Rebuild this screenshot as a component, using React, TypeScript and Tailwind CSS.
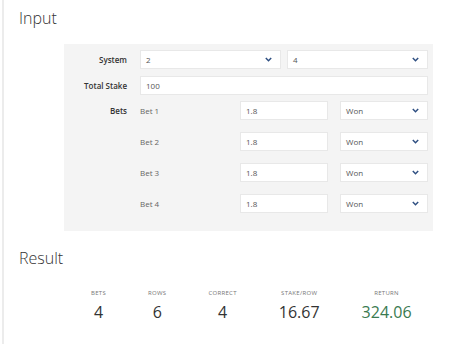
import React from "react";

const Chevron = () => (
  <svg width="7" height="5" viewBox="0 0 7 5" className="shrink-0">
    <path d="M0.8 1 L3.5 3.7 L6.2 1" fill="none" stroke="#2f4f82" strokeWidth="1.5" />
  </svg>
);

const Select = ({ value }: { value: string }) => (
  <div className="h-[19px] bg-white border border-[#e8e8e8] flex items-center justify-between pl-[5px] pr-[8px] text-[8px] text-[#555]">
    <span>{value}</span>
    <Chevron />
  </div>
);

const Input = ({ value }: { value: string }) => (
  <div className="h-[19px] bg-white border border-[#e8e8e8] flex items-center pl-[5px] text-[8px] text-[#555]">
    {value}
  </div>
);

const Label = ({ children }: { children: React.ReactNode }) => (
  <div className="h-[19px] flex items-center justify-end text-[8px] font-semibold text-[#333]">{children}</div>
);

const Stat = ({ label, value, green }: { label: string; value: string; green?: boolean }) => (
  <div className="flex flex-col items-center">
    <div className="h-[8px] leading-[8px] text-[6px] tracking-[0.3px] text-[#777] uppercase">{label}</div>
    <div className={"mt-[5px] h-[20px] leading-[20px] text-[16px] " + (green ? "text-[#3a7a50]" : "text-[#333]")}>{value}</div>
  </div>
);

export default function App() {
  const bets = ["Bet 1", "Bet 2", "Bet 3", "Bet 4"];
  return (
    <div className="w-[474px] h-[344px] bg-white overflow-hidden" style={{ fontFamily: '"Open Sans", "Noto Sans", sans-serif' }}>
      <div className="ml-[2px] h-full border-l-2 border-[#ececec] pl-[15px]">
        <div className="pt-[7px] h-[29px] leading-[22px] text-[16px] font-light text-[#333]">Input</div>
        <div className="mt-[15px] ml-[45px] w-[369px] bg-[#f4f4f4] pt-[6px] pb-[18px] pr-[5px] grid grid-cols-[63px_1fr] gap-x-[13px]">
          <Label>System</Label>
          <div className="grid grid-cols-2 gap-x-[6px]">
            <Select value="2" />
            <Select value="4" />
          </div>
          <div className="mt-[7px] col-span-2 grid grid-cols-[63px_1fr] gap-x-[13px]">
            <Label>Total Stake</Label>
            <Input value="100" />
          </div>
          <div className="mt-[6px]">
            <Label>Bets</Label>
          </div>
          <div className="mt-[6px] flex flex-col gap-y-[12px]">
            {bets.map((b) => (
              <div key={b} className="grid grid-cols-3 gap-x-[12px]">
                <div className="h-[19px] flex items-center text-[8px] text-[#666]">{b}</div>
                <Input value="1.8" />
                <Select value="Won" />
              </div>
            ))}
          </div>
        </div>
        <div className="mt-[16px] h-[22px] leading-[22px] text-[16px] font-light text-[#333]">Result</div>
        <div className="mt-[20px] ml-[72px] flex gap-x-[42px]">
          <Stat label="Bets" value="4" />
          <Stat label="Rows" value="6" />
          <Stat label="Correct" value="4" />
          <Stat label="Stake/Row" value="16.67" />
          <Stat label="Return" value="324.06" green />
        </div>
      </div>
    </div>
  );
}
